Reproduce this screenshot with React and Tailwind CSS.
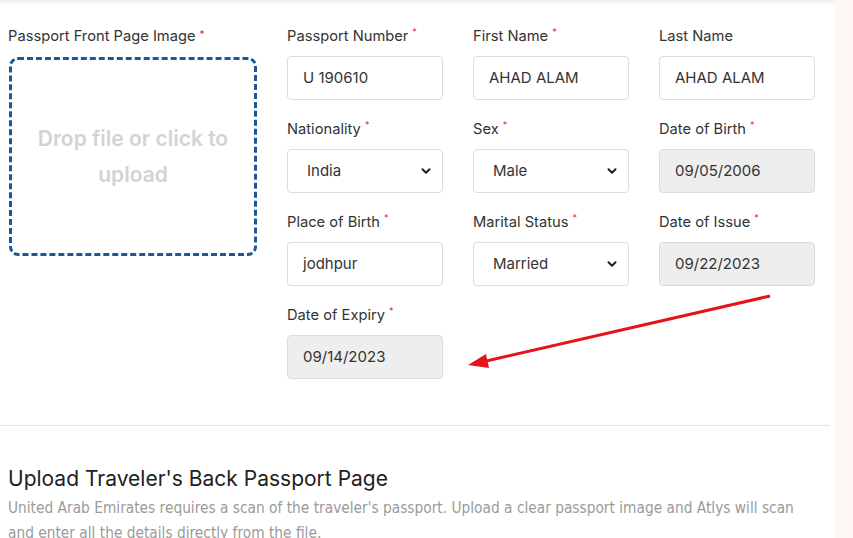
import { ChevronDown } from "lucide-react";

const font = { fontFamily: "Inter, 'Noto Sans', sans-serif" };

function Req() {
  return <span className="text-[#e0243a] text-[9px] relative -top-[6px] ml-[4px]">*</span>;
}

function Field({ label, required, value, disabled, select }) {
  return (
    <div className="flex flex-col">
      <div className="relative top-[1px] h-[21px] text-[14.7px] text-[#333] leading-[21px] whitespace-nowrap">
        {label}
        {required && <Req />}
      </div>
      <div
        className={`mt-[10px] h-[44px] rounded-[4px] border border-[#dcdcdc] flex items-center text-[15px] text-[#333] ${
          disabled ? "bg-[#eeeeee]" : "bg-white"
        } ${select ? "pl-[19px] pr-[9px] justify-between" : "pl-[15px]"}`}
      >
        <span>{value}</span>
        {select && <ChevronDown size={14} strokeWidth={3.5} className="text-[#222]" />}
      </div>
    </div>
  );
}

export default function App() {
  return (
    <div className="w-[853px] h-[538px] overflow-hidden flex bg-white" style={font}>
      <div className="w-[835px] flex flex-col relative">
        <div className="shrink-0 h-[5px] bg-gradient-to-b from-[#ececec] to-white" />
        <div className="shrink-0 flex pl-[8px] pt-[20px]">
          <div className="w-[250px] flex flex-col">
            <div className="relative top-[1px] h-[21px] text-[14.7px] text-[#333] leading-[21px] whitespace-nowrap">
              Passport Front Page Image<span className="text-[#e0243a] text-[10px] relative -top-[3px] ml-[4px]">*</span>
            </div>
            <div className="mt-[11px] ml-[1px] w-[248px] h-[199px] border-[3px] border-dashed border-[#1b5996] rounded-[9px] flex items-center justify-center text-center">
              <div className="text-[#d3d3d3] text-[21px] font-semibold leading-[36px] px-[10px]">
                Drop file or click to upload
              </div>
            </div>
          </div>
          <div className="ml-[29px] grid grid-cols-[156px_156px_156px] gap-x-[30px] gap-y-[18px]">
            <Field label="Passport Number" required value="U 190610" />
            <Field label="First Name" required value="AHAD ALAM" />
            <Field label="Last Name" value="AHAD ALAM" />
            <Field label="Nationality" required value="India" select />
            <Field label="Sex" required value="Male" select />
            <Field label="Date of Birth" required value="09/05/2006" disabled />
            <Field label="Place of Birth" required value="jodhpur" />
            <Field label="Marital Status" required value="Married" select />
            <Field label="Date of Issue" required value="09/22/2023" disabled />
            <Field label="Date of Expiry" required value="09/14/2023" disabled />
          </div>
        </div>
        <div className="shrink-0 mt-[46px] mr-[5px] h-[1px] bg-[#e3e3e3]" />
        <div className="shrink-0 pl-[8px] pt-[39px]">
          <div className="text-[21px] text-[#222] leading-[28px]" style={{ fontFamily: "Inter, sans-serif" }}>
            Upload Traveler's Back Passport Page
          </div>
          <div
            className="mt-[3px] text-[15.3px] text-[#9a9a9a] leading-[25px] w-[820px]"
            style={{ fontFamily: "'Liberation Sans Narrow', 'DejaVu Sans Condensed', sans-serif" }}
          >
            United Arab Emirates requires a scan of the traveler's passport. Upload a clear passport image and Atlys will scan
            <br />
            and enter all the details directly from the file.
          </div>
        </div>
        <svg className="absolute left-0 top-0 pointer-events-none" width="835" height="538">
          <line x1="770" y1="296" x2="482" y2="362" stroke="#e5141b" strokeWidth="3" />
          <polygon points="468,365 486,354 489,368" fill="#e5141b" />
        </svg>
      </div>
      <div className="flex-1 bg-[#fdf6f4]" />
    </div>
  );
}
